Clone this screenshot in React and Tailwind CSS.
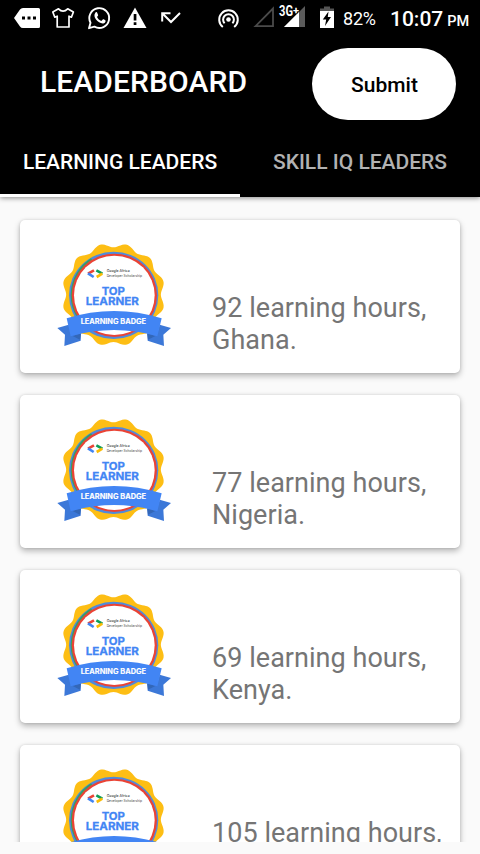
import React from "react";

const leaders = [
  { hours: 92, country: "Ghana" },
  { hours: 77, country: "Nigeria" },
  { hours: 69, country: "Kenya" },
  { hours: 105, country: "Nigeria" },
];

// Outline of the twelve-petal rosette behind the badge.
const rosette = Array.from({ length: 180 }, (_, i) => {
  const a = (i * 2 * Math.PI) / 180;
  const r = 148.5 - 6.5 * Math.cos(12 * a);
  return `${(340.5 + r * Math.sin(a)).toFixed(1)},${(284 - r * Math.cos(a)).toFixed(1)}`;
}).join(" ");

function Badge() {
  return (
    <svg className="block h-[107px] w-[119px]" viewBox="165 126 357 321">
      <polygon points={rosette} fill="#fdbe14" />
      <ellipse cx="341" cy="286" rx="134" ry="131" fill="#4f8bdc" />
      <path d="M275 178A126 126 0 0 0 275 392" fill="none" stroke="#34a065" strokeWidth="7" />
      <ellipse cx="343" cy="286" rx="128" ry="125" fill="#ea4335" />
      <ellipse cx="343" cy="286" rx="121" ry="119" fill="#fff" />
      <g fill="none" strokeWidth="8">
        <path d="M282 211L264 221" stroke="#ea4335" />
        <path d="M264 220L281 231" stroke="#4285f4" />
        <path d="M289 211L307 221" stroke="#0f9d58" />
        <path d="M307 221L290 231" stroke="#fbbc04" />
      </g>
      <g className="font-['Inter']" fill="#444">
        <text x="320" y="216" fontSize="11" fontWeight="500" textLength="69" lengthAdjust="spacingAndGlyphs">Google Africa</text>
        <text x="320" y="230" fontSize="11" textLength="106" lengthAdjust="spacingAndGlyphs">Developer Scholarship</text>
      </g>
      <g className="font-['Inter']" fill="#4285f4" stroke="#4285f4" strokeWidth="0.800" fontWeight="700">
        <text x="305" y="284" fontSize="33" textLength="70" lengthAdjust="spacingAndGlyphs">TOP</text>
        <text x="257" y="314" fontSize="33" textLength="160" lengthAdjust="spacingAndGlyphs">LEARNER</text>
      </g>
      <path d="M172 384L206 374L214 402L243 400L242 422L193 438L195 404Z" fill="#3c78d8" />
      <path d="M513 384L479 374L471 402L442 400L443 422L492 438L490 404Z" fill="#3c78d8" />
      <path d="M218 408L243 400L240 419Z" fill="#3367b8" />
      <path d="M466 408L441 400L444 419Z" fill="#3367b8" />
      <path d="M200 355Q342 311 485 355L472 409Q342 371 212 409Z" fill="#4285f4" />
      <text className="font-['Inter']" x="242" y="373" fontSize="21" fontWeight="700" fill="#fff" stroke="#fff" strokeWidth="0.400" textLength="196" lengthAdjust="spacingAndGlyphs">LEARNING BADGE</text>
    </svg>
  );
}

function StatusIcons() {
  return (
    <svg className="block h-9 w-[340px] shrink-0" viewBox="0 0 340 36">
      <path d="M14 18L20 9.500Q21 8 23 8H38.500Q40 8 40 9.500V26.500Q40 28 38.500 28H23Q21 28 20 26.500Z" fill="#fff" />
      <path d="M22 16.500h3v3h-3zM27.500 16.500h3v3h-3zM33 16.500h3v3h-3z" fill="#000" />
      <path d="M58.500 8.800L52.800 12L54.800 17.200L57.200 16.200V27H69V16.200L71.400 17.200L73.400 12L67.700 8.800Q63 13.500 58.500 8.800Z" fill="none" stroke="#fff" strokeWidth="1.700" strokeLinejoin="round" />
      <path d="M89 28.200L90.500 22.700A9.900 9.900 0 1 1 94.400 26.700Z" fill="none" stroke="#fff" strokeWidth="1.900" strokeLinejoin="round" />
      <path d="M95.500 12.500C96.500 11.700 97 12.200 97.300 13L98.100 14.900C98.300 15.500 97.500 16.300 97 16.900C98 18.800 99.300 20 101.300 20.900L102.800 19.400C103.200 19 104.500 19.800 105.500 20.400C106 20.900 105.300 22.500 104 23.200C99.500 24.800 91.500 17.200 95.500 12.500Z" fill="#fff" />
      <path d="M135 7.500L146.500 28H123.500Z" fill="#fff" />
      <path d="M133.700 14h2.700v6.500h-2.700zM133.700 22.300h2.700v2.800h-2.700z" fill="#000" />
      <path d="M162.200 21.500V13.300H170.500M162.500 13.500L171 22L180 13" fill="none" stroke="#fff" strokeWidth="2" />
      <g fill="none" stroke="#fff" strokeWidth="2">
        <path d="M222.800 27A9.300 9.300 0 1 1 234.200 27" />
        <path d="M224.600 23.300A5.400 5.400 0 1 1 232.400 23.300" />
      </g>
      <circle cx="228.500" cy="19.500" r="2.300" fill="#fff" />
      <path d="M255.500 26.200H273V8.500Z" fill="none" stroke="#4b4b4b" strokeWidth="1.800" />
      <path d="M284 27L305 6V27Z" fill="#5b5b5b" />
      <path d="M284 27L299 12V27Z" fill="#fff" />
      <text className="font-['Roboto']" x="279" y="16" fontSize="14" fontWeight="700" fill="#fff" stroke="#000" strokeWidth="1" paintOrder="stroke" textLength="14" lengthAdjust="spacingAndGlyphs">3G</text>
      <text className="font-['Roboto']" x="293" y="13.500" fontSize="11" fontWeight="700" fill="#fff" stroke="#000" strokeWidth="1" paintOrder="stroke" textLength="6" lengthAdjust="spacingAndGlyphs">+</text>
      <path d="M320 11V8.500H324V6.500H330V8.500H334V11Z" fill="#555" />
      <path d="M320 11H334V28H320Z" fill="#fff" />
      <path d="M328.500 11.500L322.800 19.500H326.200L325 26L331 17H327.800Z" fill="#000" />
    </svg>
  );
}

export default function App() {
  return (
    <div className="flex h-[854px] w-[480px] flex-col overflow-hidden bg-[#fafafa] font-['Roboto',sans-serif]">
      <header className="relative z-10 flex h-[197px] shrink-0 flex-col bg-black text-white shadow-[0_1px_5px_rgba(0,0,0,0.45)]">
        <div className="flex h-9 items-start">
          <StatusIcons />
          <span className="ml-[3px] w-[47px] shrink-0 pt-[8px] text-[18px] leading-[21px] tracking-[-0.2px]">82%</span>
          <span className="shrink-0 pt-[8px] text-[21px] font-medium leading-[23px]">10:07</span>
          <span className="ml-[4px] shrink-0 pt-[12px] text-[14.5px] font-medium leading-[19px]">PM</span>
        </div>
        <div className="flex h-[90px] shrink-0 items-start justify-between pl-10 pr-6 pt-3">
          <h1 className="pt-[16px] text-[30px] font-medium leading-[35px] tracking-[0.1px]">LEADERBOARD</h1>
          <button className="h-[72px] w-[144px] rounded-full bg-white pl-px pt-[3px] text-[21px] font-medium text-black">Submit</button>
        </div>
        <nav className="grid h-[71px] grid-cols-2 text-center text-[21px] font-medium leading-[73px]">
          <div className="h-[71px] border-b-[3px] border-white">LEARNING LEADERS</div>
          <div className="h-[71px] text-[#b2b2b2]">SKILL IQ LEADERS</div>
        </nav>
      </header>
      <main className="flex h-[645px] shrink-0 flex-col gap-[22px] overflow-hidden px-5 pt-[23px]">
        {leaders.map((l, i) => (
          <article key={i} className="flex h-[153px] shrink-0 rounded-[5px] bg-white pl-[35px] pt-[22px] shadow-[0_3px_6px_rgba(0,0,0,0.28),0_0_3px_rgba(0,0,0,0.12)]">
            <Badge />
            <p className="ml-[38px] w-[240px] pt-[50px] text-[27px] leading-8 tracking-[0.04px] text-[#757575]">
              {l.hours} learning hours,
              <br />
              {l.country}.
            </p>
          </article>
        ))}
      </main>
    </div>
  );
}
